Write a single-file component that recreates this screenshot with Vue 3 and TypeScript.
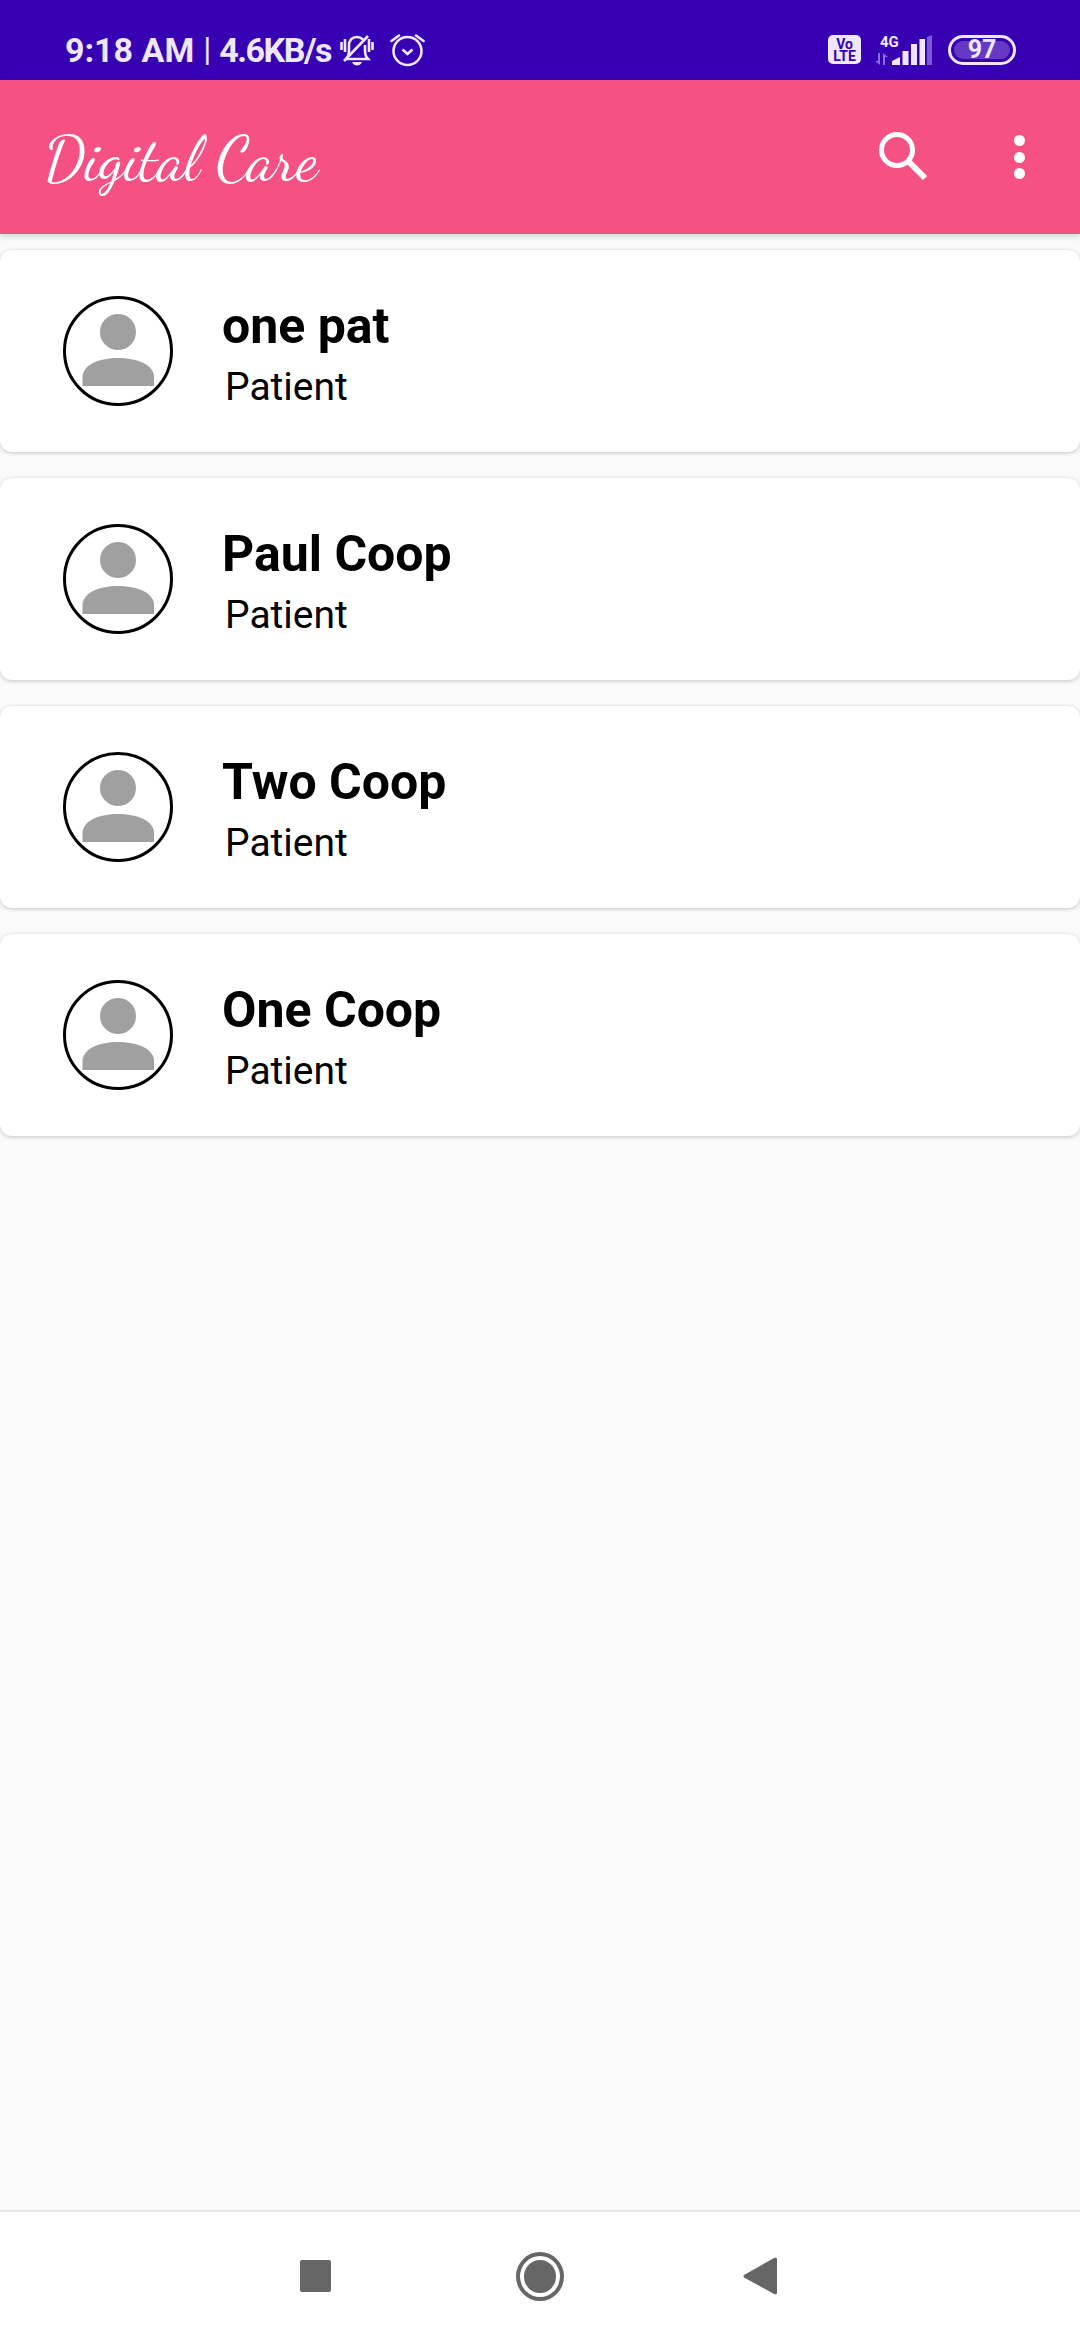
<template>
  <div class="screen">
    <div class="status-bar">
      <span class="status-time">9:18 AM</span>
      <span class="status-sep">|</span>
      <span class="status-speed">4.6KB/s</span>
      <svg class="bell" width="34" height="33" viewBox="0 0 34 33" fill="none" stroke="#ede7ff" stroke-width="2.600">
        <path d="M1.500 9v8M5 6v13M29 6v13M32.500 9v8" />
        <path d="M6 26c2.500-2 3-5 3-9V13c0-6 3-9 8-9 2.500 0 4.500 1 6 2.500M25 12v5c0 4 1 7 3 9H6" />
        <path d="M4 28 28 3" />
        <path d="M12 29h10c-1 2.500-2.800 3.500-5 3.500S13 31.500 12 29z" fill="#ede7ff" stroke="none" />
      </svg>
      <svg class="alarm" width="35" height="35" viewBox="0 0 35 35" fill="none" stroke="#ede7ff" stroke-width="2.600">
        <circle cx="17.500" cy="19" r="14" />
        <path d="M12.500 17.500 17.500 22l5-4.500" />
        <path d="M1.500 9 9 3.500M33.500 9 26 3.500" stroke-linecap="round" />
      </svg>
      <div class="status-right">
        <div class="volte">
          <span>Vo</span>
          <span>LTE</span>
        </div>
        <div class="signal-group">
          <span class="net-label">4G</span>
          <svg class="arrows" width="13" height="12" viewBox="0 0 13 12" fill="#8a6fe0">
            <path d="M3 0h2v12L0 8h3zM8 12V0l5 4h-3v8z" />
          </svg>
          <svg class="bars" width="40" height="30" viewBox="0 0 40 30">
            <path d="M0 30v-4l8-4v8z" fill="#ede7ff" />
            <rect x="10.500" y="16" width="6" height="14" fill="#ede7ff" />
            <rect x="19" y="9" width="6" height="21" fill="#ede7ff" />
            <rect x="27.500" y="4" width="5.500" height="26" fill="#ede7ff" />
            <path d="M35 2 40 0v30h-5z" fill="#7c5cd6" />
          </svg>
        </div>
        <div class="battery">
          <div class="battery-fill">97</div>
        </div>
      </div>
    </div>

    <div class="app-bar">
      <span class="app-title">Digital Care</span>
      <div class="app-actions">
        <svg width="50" height="50" viewBox="0 0 50 50" fill="none" stroke="#fff">
          <circle cx="18" cy="18" r="15.500" stroke-width="5" />
          <path d="M29 29 46 46" stroke-width="6" />
        </svg>
        <div class="more">
          <span v-for="n in 3" :key="n" class="dot"></span>
        </div>
      </div>
    </div>

    <div class="list">
      <div v-for="person in people" :key="person" class="card">
        <div class="avatar">
          <svg width="74" height="74" viewBox="0 0 74 74" fill="#a0a0a0">
            <circle cx="37" cy="18" r="18" />
            <path d="M1.500 72V62C3 50 19 44 37 44S72 50 73 62V72z" />
          </svg>
        </div>
        <div class="card-text">
          <div class="name">{{ person }}</div>
          <div class="role">Patient</div>
        </div>
      </div>
    </div>

    <div class="nav-bar">
      <span class="nav-square"></span>
      <span class="nav-home"><span class="nav-home-inner"></span></span>
      <svg class="nav-back" width="34" height="38" viewBox="0 0 34 38" fill="#666">
        <path d="M32 .5 34 1.500V36.500L32 37.500 1 20.500Q0 19 1 18z" />
      </svg>
    </div>
  </div>
</template>

<script setup lang="ts">
const people: string[] = ['one pat', 'Paul Coop', 'Two Coop', 'One Coop']
</script>

<style>
html,
body {
  margin: 0;
  background: #fafafa;
}
</style>

<style scoped>
.screen {
  width: 1080px;
  height: 2340px;
  display: flex;
  flex-direction: column;
  background: #fafafa;
  font-family: Roboto, "Liberation Sans", sans-serif;
  overflow: hidden;
}
.status-bar {
  height: 80px;
  flex: none;
  display: flex;
  align-items: center;
  background: #3700b3;
  color: #ede7ff;
  padding: 19px 0 0 65px;
  box-sizing: border-box;
}
.status-time,
.status-speed {
  font-size: 34px;
  font-weight: 700;
  line-height: 1;
  white-space: nowrap;
}
.status-speed {
  letter-spacing: -1.500px;
}
.status-sep {
  font-size: 33px;
  line-height: 1;
  margin: 0 8px 0 9px;
}
.bell {
  margin-left: 9px;
}
.alarm {
  margin-left: 16px;
}
.status-right {
  margin-left: auto;
  margin-right: 64px;
  display: flex;
  align-items: center;
}
.volte {
  width: 33px;
  height: 29px;
  border-radius: 5px;
  background: #ede7ff;
  color: #3700b3;
  font-size: 14px;
  font-weight: 700;
  line-height: 12px;
  display: flex;
  flex-direction: column;
  align-items: center;
  justify-content: center;
}
.signal-group {
  display: flex;
  align-items: flex-end;
  position: relative;
  margin-left: 14px;
  height: 30px;
}
.net-label {
  position: absolute;
  left: 5px;
  top: 0;
  font-size: 15px;
  font-weight: 700;
  line-height: 14px;
}
.arrows {
  margin-right: 4px;
}
.battery {
  width: 68px;
  height: 30px;
  box-sizing: border-box;
  margin-left: 16px;
  border: 3px solid #ede7ff;
  border-radius: 15px;
  padding: 3px;
  display: flex;
}
.battery-fill {
  flex: 1;
  border-radius: 9px;
  background: #6538c6;
  color: #ede7ff;
  font-size: 25px;
  font-weight: 700;
  line-height: 18px;
  text-align: center;
}
.app-bar {
  height: 154px;
  flex: none;
  display: flex;
  align-items: center;
  background: #f65183;
  box-shadow: 0 2px 6px rgba(0, 0, 0, 0.18);
  position: relative;
  z-index: 1;
}
.app-title {
  margin-left: 44px;
  margin-top: 4px;
  color: #fff;
  font-family: "Dancing Script", cursive;
  font-size: 63px;
  line-height: 1;
}
.app-actions {
  margin-left: auto;
  display: flex;
  align-items: center;
  margin-right: 55px;
  gap: 85px;
}
.more {
  display: flex;
  flex-direction: column;
  gap: 5.500px;
}
.dot {
  width: 11px;
  height: 11px;
  border-radius: 50%;
  background: #fff;
}
.list {
  flex: 1;
  display: flex;
  flex-direction: column;
  gap: 26px;
  padding-top: 16px;
}
.card {
  height: 202px;
  flex: none;
  box-sizing: border-box;
  background: #fff;
  border-radius: 12px;
  box-shadow: 0 1px 4px rgba(0, 0, 0, 0.22);
  display: flex;
  align-items: center;
  padding-left: 63px;
}
.avatar {
  width: 110px;
  height: 110px;
  box-sizing: border-box;
  border: 3px solid #000;
  border-radius: 50%;
  display: flex;
  align-items: center;
  justify-content: center;
  flex: none;
}
.card-text {
  margin-left: 49px;
  margin-top: 6px;
}
.name {
  font-size: 50px;
  font-weight: 700;
  line-height: 53px;
  color: #000;
}
.role {
  margin-top: 12px;
  margin-left: 3px;
  font-size: 39px;
  line-height: 44px;
  color: #000;
}
.nav-bar {
  height: 130px;
  flex: none;
  box-sizing: border-box;
  border-top: 2px solid #e8e8e8;
  background: #fff;
  display: flex;
  align-items: center;
  padding-left: 300px;
}
.nav-square {
  width: 31px;
  height: 32px;
  border-radius: 2px;
  background: #666;
}
.nav-home {
  width: 48px;
  height: 49px;
  box-sizing: border-box;
  margin-left: 185px;
  border: 4px solid #666;
  border-radius: 50%;
  padding: 4px;
  display: flex;
}
.nav-home-inner {
  flex: 1;
  border-radius: 50%;
  background: #666;
}
.nav-back {
  margin-left: 179px;
}
</style>
